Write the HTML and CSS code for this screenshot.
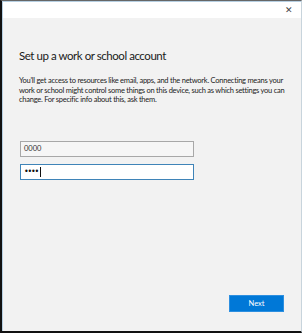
FILE: index.html
```html
<!DOCTYPE html>
<html lang="en">
<head>
    <meta charset="UTF-8">
    <meta name="viewport" content="width=device-width, initial-scale=1.0">
    <title>Set up a work or school account</title>
    <link rel="stylesheet" href="styles.css">
</head>
<body>
    <div class="window">
        <div class="frame">
            <div class="title-bar">
                <span class="close">&#x2715;</span>
            </div>
            <div class="content">
                <h1>Set up a work or school account</h1>
                <p>You'll get access to resources like email, apps, and the network. Connecting means your work or school might control some things on this device, such as which settings you can change. For specific info about this, ask them.</p>
                <div class="field">0000</div>
                <div class="field active"><span class="dots">&#8226;&#8226;&#8226;&#8226;</span><span class="caret"></span></div>
                <div class="actions">
                    <button class="next-button">Next</button>
                </div>
            </div>
        </div>
    </div>
</body>
</html>
```

FILE: styles.css
```css
html, body {
    margin: 0;
    padding: 0;
    height: 100%;
}

body {
    font-family: Lato, "Noto Sans", sans-serif;
    color: #222;
}

.window {
    box-sizing: border-box;
    height: 333px;
    border-left: 2px solid #111;
    border-bottom: 2px solid #111;
    border-top: 1px solid #666;
    border-right: 1px solid #c8d4dc;
}

.frame {
    box-sizing: border-box;
    height: 100%;
    border: 1px solid #b6cfe2;
    border-right: none;
    border-bottom: none;
    display: flex;
    flex-direction: column;
    background: #f2f2f2;
}

.title-bar {
    height: 16px;
    background: #fff;
    position: relative;
}

.close {
    position: absolute;
    right: 8px;
    top: 3px;
    font-size: 9px;
    color: #444;
    line-height: 10px;
}

.content {
    flex: 1;
    display: flex;
    flex-direction: column;
    padding: 30.5px 16px 19px 16px;
}

h1 {
    margin: 0;
    font-size: 11.5px;
    line-height: 14px;
    font-weight: 400;
    letter-spacing: -0.45px;
    color: #1a1a1a;
}

p {
    margin: 13.5px 0 36.5px 0;
    font-size: 7.5px;
    line-height: 9.5px;
    letter-spacing: -0.25px;
    color: #222;
}

.field {
    box-sizing: border-box;
    width: 174px;
    height: 16px;
    margin-left: 1px;
    border: 1px solid #a8a8a8;
    background: #f6f6f6;
    font-size: 7.5px;
    line-height: 14px;
    padding-left: 3px;
    color: #333;
}

.field.active {
    margin-top: 7px;
    border: 1px solid #3f84b8;
    background: #fff;
    display: flex;
    align-items: center;
}

.dots {
    font-family: "DejaVu Sans", sans-serif;
    font-size: 8px;
    letter-spacing: -1.2px;
    color: #111;
}

.caret {
    display: inline-block;
    width: 1px;
    height: 10px;
    background: #111;
    margin-left: 2px;
}

.actions {
    margin-top: auto;
    margin-right: 1px;
    display: flex;
    justify-content: flex-end;
}

.next-button {
    width: 55px;
    height: 17px;
    padding: 0;
    border: 1px solid #2d8fe0;
    background: #0078d7;
    color: #fff;
    font-family: inherit;
    font-size: 7.5px;
}
```
